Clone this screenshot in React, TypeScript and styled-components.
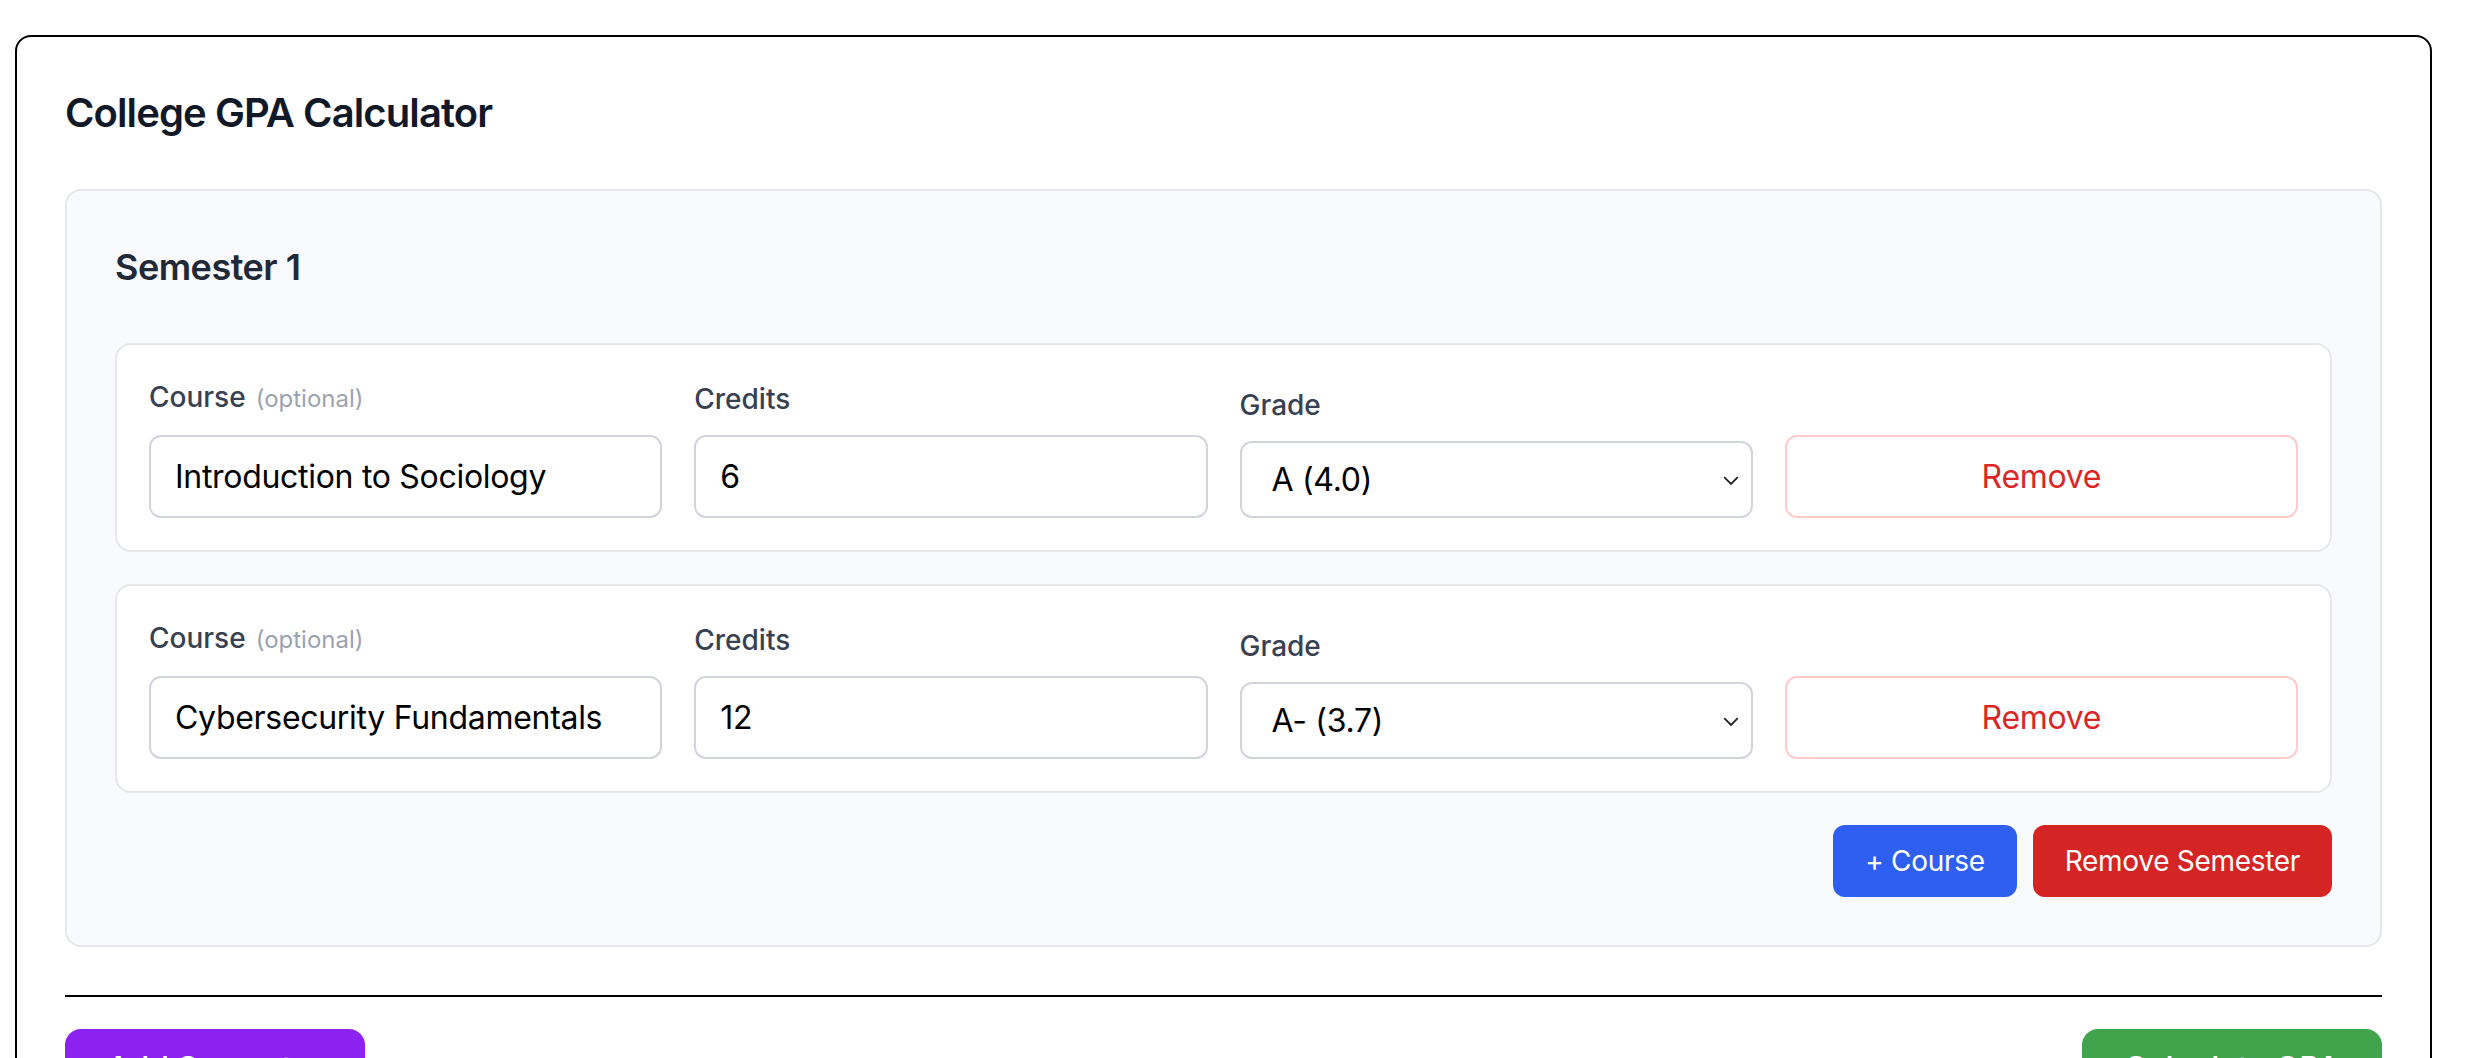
import React from "react";
import styled, { createGlobalStyle } from "styled-components";

const GlobalStyle = createGlobalStyle`
  html { zoom: 2; overflow: hidden; background: #ffffff; }
  body { margin: 0; font-family: Inter, "Noto Sans", sans-serif; color: #111827; }
  *, *::before, *::after { box-sizing: border-box; }
`;

const Page = styled.div`
  padding: 17.5px 20px 8px 7.5px;
`;

const Card = styled.section`
  border: 1px solid #000;
  border-radius: 8px;
  padding: 24px;
  background: #fff;
`;

const Title = styled.h2`
  margin: 0 0 24px;
  font-size: 20px;
  line-height: 28px;
  font-weight: 600;
  letter-spacing: -0.45px;
  color: #111827;
`;

const SemesterPanel = styled.div`
  border: 1px solid #e5e7eb;
  background: #f9fafb;
  border-radius: 8px;
  padding: 24px;
`;

const SemesterTitle = styled.h3`
  margin: 0 0 24px;
  font-size: 18px;
  line-height: 28px;
  font-weight: 600;
  letter-spacing: -0.25px;
  color: #1f2937;
`;

const CourseList = styled.div`
  display: flex;
  flex-direction: column;
  gap: 16px;
`;

const CourseRow = styled.div`
  display: grid;
  grid-template-columns: repeat(4, minmax(0, 1fr));
  gap: 16px;
  align-items: end;
  background: #fff;
  border: 1px solid #e5e7eb;
  border-radius: 8px;
  padding: 16px;
`;

const Field = styled.label`
  display: flex;
  flex-direction: column;
  gap: 8px;
`;

const LabelText = styled.span`
  font-size: 14px;
  line-height: 20px;
  font-weight: 500;
  color: #374151;
`;

const Optional = styled.span`
  margin-left: 5px;
  font-size: 12px;
  font-weight: 400;
  color: #9ca3af;
`;

const TextInput = styled.input`
  width: 100%;
  height: 41.5px;
  padding: 0 12px;
  border: 1px solid #d1d5db;
  border-radius: 6px;
  background: #fff;
  color: #000;
  font-family: Inter, "Noto Sans", sans-serif;
  font-size: 16px;
  letter-spacing: -0.15px;
  outline: none;
`;

const SelectWrap = styled.div`
  position: relative;
  width: 100%;
`;

const Select = styled.select`
  width: 100%;
  height: 38.5px;
  padding: 0 24px 0 15px;
  border: 1px solid #d1d5db;
  border-radius: 6px;
  background: #fff;
  color: #000;
  font-family: Inter, "Noto Sans", sans-serif;
  font-size: 16px;
  letter-spacing: -0.15px;
  appearance: none;
  -webkit-appearance: none;
  outline: none;
`;

const Chevron = styled.svg`
  position: absolute;
  right: 7px;
  top: 50%;
  width: 8px;
  height: 5px;
  margin-top: -2px;
  pointer-events: none;
`;

const RemoveButton = styled.button`
  width: 100%;
  height: 41.5px;
  border: 1px solid #fecaca;
  border-radius: 6px;
  background: #fff;
  color: #dc2626;
  font-family: Inter, "Noto Sans", sans-serif;
  font-size: 16px;
  letter-spacing: -0.15px;
  cursor: pointer;
`;

const Actions = styled.div`
  display: flex;
  justify-content: flex-end;
  gap: 8px;
  margin-top: 16px;
`;

const SmallButton = styled.button<{ $bg: string }>`
  height: 36px;
  padding: 0 16px;
  border: none;
  border-radius: 6px;
  background: ${(p) => p.$bg};
  color: #fff;
  font-family: Inter, "Noto Sans", sans-serif;
  font-size: 14px;
  line-height: 20px;
  letter-spacing: -0.15px;
  cursor: pointer;
`;

const Divider = styled.div`
  margin-top: 24px;
  border-top: 1px solid #000;
`;

const Footer = styled.div`
  display: flex;
  justify-content: space-between;
  padding-top: 16px;
`;

const BigButton = styled.button<{ $bg: string }>`
  padding: 8px 21px;
  border: none;
  border-radius: 8px;
  background: ${(p) => p.$bg};
  color: #fff;
  font-family: Inter, "Noto Sans", sans-serif;
  font-size: 16px;
  line-height: 24px;
  font-weight: 500;
  cursor: pointer;
`;

const grades = [
  "A (4.0)",
  "A- (3.7)",
  "B+ (3.3)",
  "B (3.0)",
  "B- (2.7)",
  "C+ (2.3)",
  "C (2.0)",
  "C- (1.7)",
  "D+ (1.3)",
  "D (1.0)",
  "F (0.0)",
];

const courses = [
  { name: "Introduction to Sociology", credits: "6", grade: "A (4.0)" },
  { name: "Cybersecurity Fundamentals", credits: "12", grade: "A- (3.7)" },
];

export default function App() {
  return (
    <>
      <GlobalStyle />
      <Page>
        <Card>
          <Title>College GPA Calculator</Title>
          <SemesterPanel>
            <SemesterTitle>Semester 1</SemesterTitle>
            <CourseList>
              {courses.map((c, i) => (
                <CourseRow key={i}>
                  <Field>
                    <LabelText>
                      Course<Optional>(optional)</Optional>
                    </LabelText>
                    <TextInput defaultValue={c.name} />
                  </Field>
                  <Field>
                    <LabelText>Credits</LabelText>
                    <TextInput defaultValue={c.credits} />
                  </Field>
                  <Field>
                    <LabelText>Grade</LabelText>
                    <SelectWrap>
                      <Select defaultValue={c.grade}>
                        {grades.map((g) => (
                          <option key={g} value={g}>
                            {g}
                          </option>
                        ))}
                      </Select>
                      <Chevron viewBox="0 0 8 5" fill="none">
                        <path d="M0.6 0.6L4 4L7.4 0.6" stroke="#222" strokeWidth="0.9" />
                      </Chevron>
                    </SelectWrap>
                  </Field>
                  <RemoveButton>Remove</RemoveButton>
                </CourseRow>
              ))}
            </CourseList>
            <Actions>
              <SmallButton $bg="#2e5ff0">+ Course</SmallButton>
              <SmallButton $bg="#d42424">Remove Semester</SmallButton>
            </Actions>
          </SemesterPanel>
          <Divider />
          <Footer>
            <BigButton $bg="#8d22f0">Add Semester</BigButton>
            <BigButton $bg="#41a44c">Calculate GPA</BigButton>
          </Footer>
        </Card>
      </Page>
    </>
  );
}
